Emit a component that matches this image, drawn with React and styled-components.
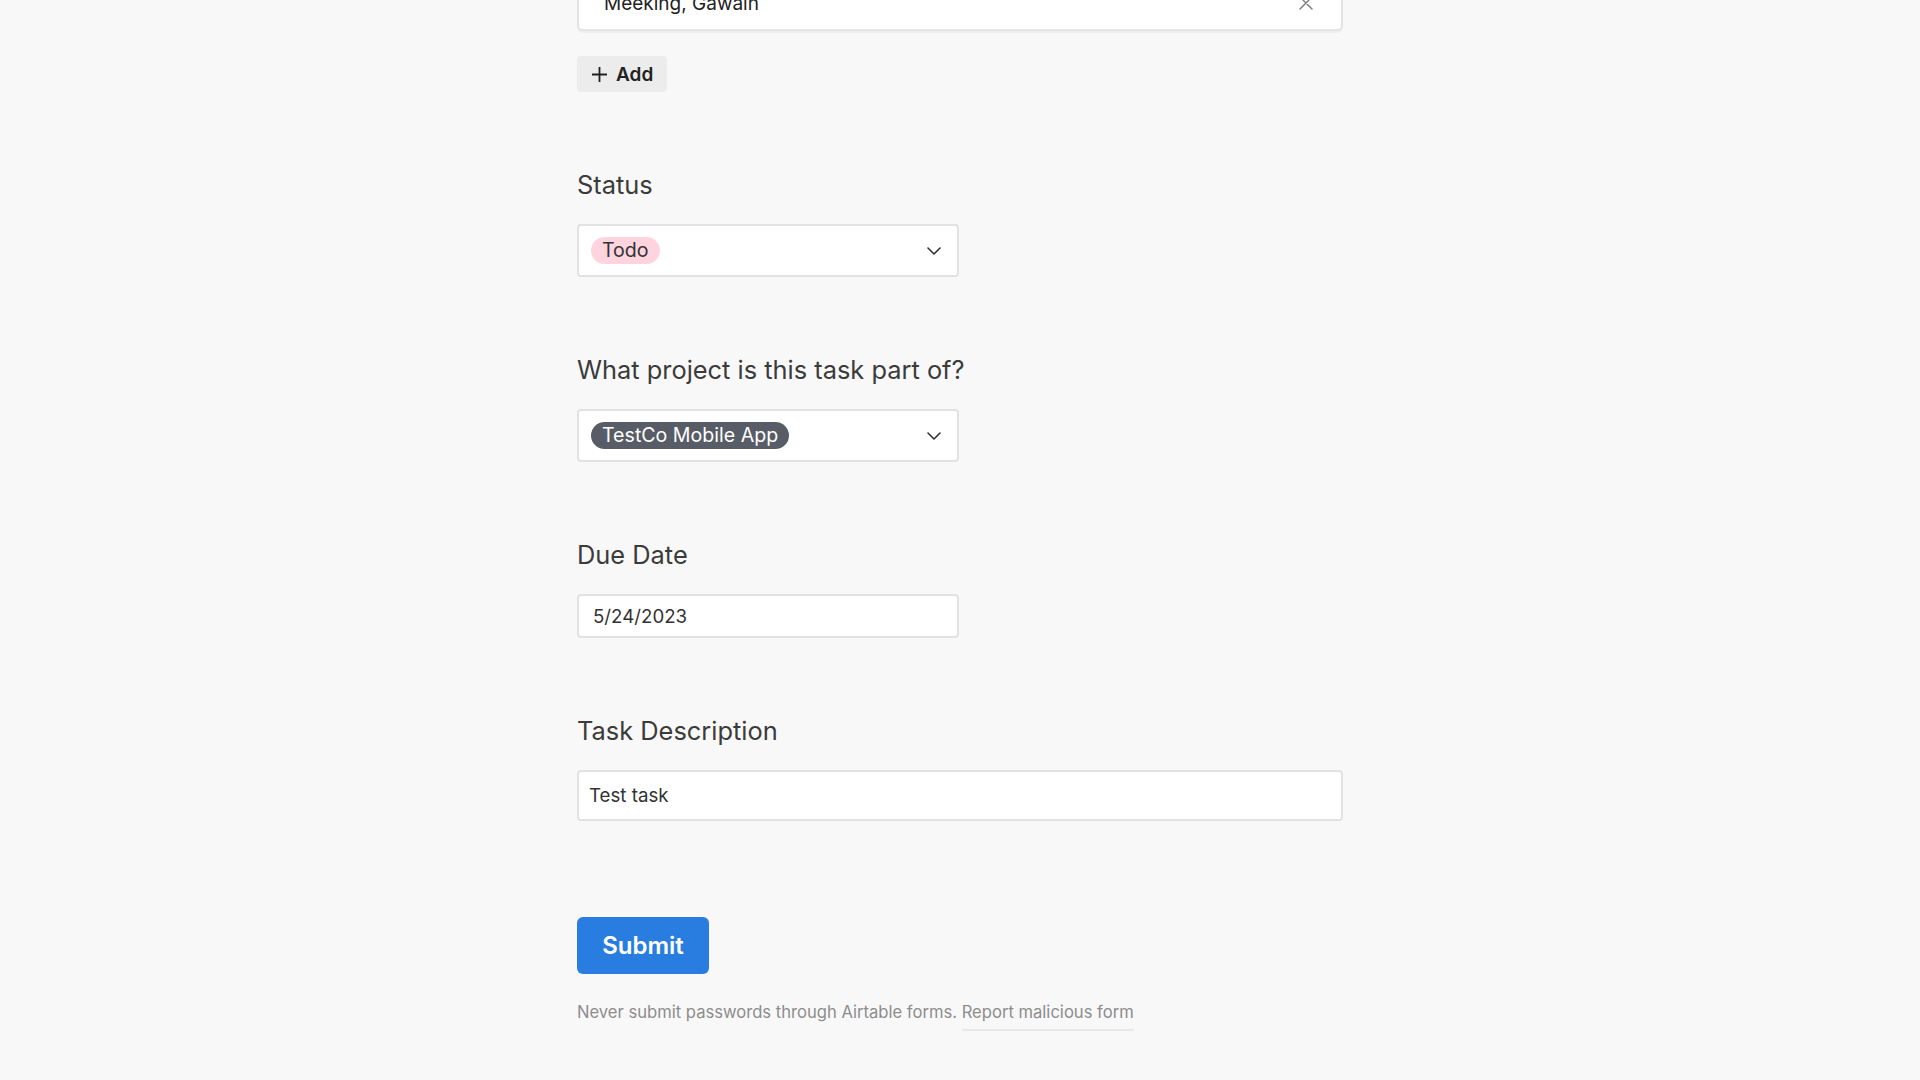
import React from 'react';
import styled, { createGlobalStyle } from 'styled-components';

const GlobalStyle = createGlobalStyle`
   html, body {
      margin: 0;
      padding: 0;
      background: #f8f8f8;
      font-family: Inter, "Noto Sans", "Liberation Sans", sans-serif;
      overflow: hidden;
   }
`

const Page = styled.div`
   width: 100%;
   height: 1080px;
   background: #f8f8f8;
   display: flex;
   justify-content: center;
`
const Form = styled.div`
   width: 766px;
   display: flex;
   flex-direction: column;
   align-items: flex-start;
`
const LinkedCard = styled.div`
   box-sizing: border-box;
   width: 100%;
   height: 52px;
   margin-top: -21px;
   background: white;
   border: 2px solid #e4e4e4;
   border-radius: 6px;
   box-shadow: 0 2px 0 rgba(0,0,0,0.04);
   display: flex;
   align-items: center;
   justify-content: space-between;
   padding: 0 28px 4px 25px;
   font-size: 19px;
   color: #222;
   & svg {
      display: block;
   }
`
const AddButton = styled.button`
   box-sizing: border-box;
   margin-top: 25px;
   height: 36px;
   width: 90px;
   border: none;
   border-radius: 4px;
   background: #ececec;
   display: flex;
   align-items: center;
   gap: 8px;
   padding: 0 0 0 14px;
   font-family: inherit;
   font-size: 19px;
   font-weight: 600;
   color: #222;
`
const Field = styled.div`
   width: 100%;
   margin-top: ${({ gap }) => gap}px;
   display: flex;
   flex-direction: column;
   gap: 23px;
`
const Label = styled.div`
   height: 32px;
   line-height: 32px;
   font-size: 25.4px;
   color: #3b3b3b;
`
const Control = styled.div`
   box-sizing: border-box;
   width: ${({ wide }) => wide ? '766px' : '382px'};
   height: ${({ h }) => h}px;
   background: white;
   border: 2px solid #e2e2e2;
   border-radius: 4px;
   display: flex;
   align-items: center;
   justify-content: space-between;
   padding: ${({ pad }) => pad};
   font-size: 18.7px;
   color: #333;
`
const Pill = styled.span`
   height: 27px;
   line-height: 27px;
   padding: 0 11px;
   border-radius: 14px;
   background: ${({ bg }) => bg};
   color: ${({ fg }) => fg};
   font-size: 19.6px;
`
const SubmitButton = styled.button`
   margin-top: 96px;
   width: 132px;
   height: 57px;
   border: none;
   border-radius: 6px;
   background: #2a7de0;
   color: white;
   font-family: inherit;
   font-size: 24px;
   font-weight: 600;
`
const Footer = styled.div`
   margin-top: 28px;
   font-size: 16.6px;
   line-height: 20px;
   color: #8d8d8d;
   & a {
      color: #8d8d8d;
      text-decoration: none;
      padding-bottom: 7px;
      border-bottom: 2px solid #e8e8e8;
   }
`

const Chevron = () => (
   <svg width="14" height="8" viewBox="0 0 14 8" fill="none">
      <path d="M1 1l6 6 6-6" stroke="#333" strokeWidth="1.6" strokeLinecap="round" strokeLinejoin="round"/>
   </svg>
)

const App = () => {
   return(
      <Page>
         <GlobalStyle/>
         <Form>
            <LinkedCard>
               <span>Meeking, Gawain</span>
               <svg width="14" height="14" viewBox="0 0 14 14" fill="none">
                  <path d="M1 1l12 12M13 1L1 13" stroke="#7a7a7a" strokeWidth="1.4" strokeLinecap="round"/>
               </svg>
            </LinkedCard>
            <AddButton>
               <svg width="17" height="17" viewBox="0 0 17 17" fill="none">
                  <path d="M8.5 1v15M1 8.5h15" stroke="#222" strokeWidth="1.8"/>
               </svg>
               Add
            </AddButton>

            <Field gap={77}>
               <Label>Status</Label>
               <Control h={53} pad="0 16px 0 12px">
                  <Pill bg="#ffd4df" fg="#333">Todo</Pill>
                  <Chevron/>
               </Control>
            </Field>

            <Field gap={77}>
               <Label>What project is this task part of?</Label>
               <Control h={53} pad="0 16px 0 12px">
                  <Pill bg="#575c66" fg="white">TestCo Mobile App</Pill>
                  <Chevron/>
               </Control>
            </Field>

            <Field gap={77}>
               <Label>Due Date</Label>
               <Control h={44} pad="0 14px">5/24/2023</Control>
            </Field>

            <Field gap={77}>
               <Label>Task Description</Label>
               <Control wide h={51} pad="0 10px">Test task</Control>
            </Field>

            <SubmitButton>Submit</SubmitButton>
            <Footer>
               Never submit passwords through Airtable forms. <a>Report malicious form</a>
            </Footer>
         </Form>
      </Page>
   )
}

export default App;
